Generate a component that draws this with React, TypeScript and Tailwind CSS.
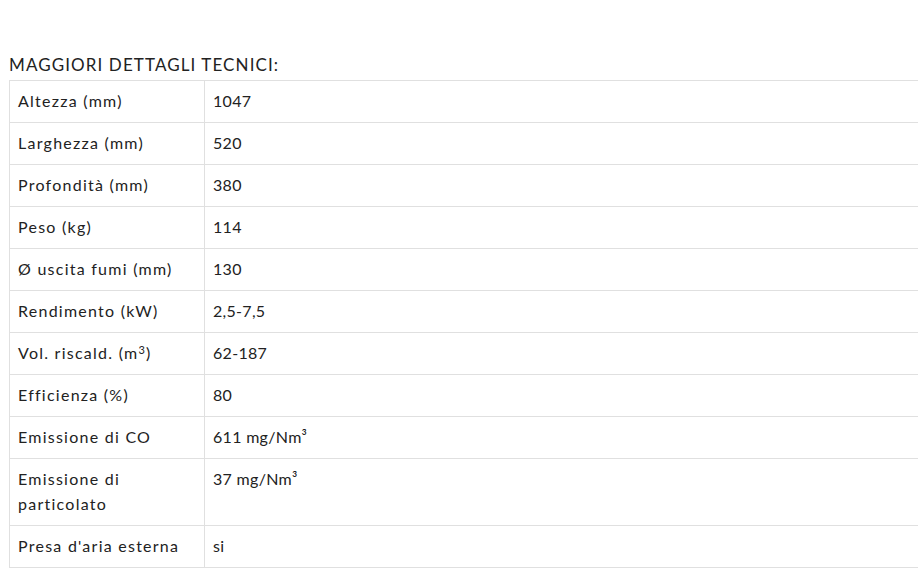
const rows: [React.ReactNode, string][] = [
  ['Altezza (mm)', '1047'],
  ['Larghezza (mm)', '520'],
  ['Profondità (mm)', '380'],
  ['Peso (kg)', '114'],
  ['Ø uscita fumi (mm)', '130'],
  ['Rendimento (kW)', '2,5-7,5'],
  [
    <>
      Vol. riscald. (m<sup className="text-[11px]">3</sup>)
    </>,
    '62-187',
  ],
  ['Efficienza (%)', '80'],
  ['Emissione di CO', '611 mg/Nm³'],
  [
    <>
      Emissione di
      <br />
      particolato
    </>,
    '37 mg/Nm³',
  ],
  ["Presa d'aria esterna", 'si'],
]

export default function App() {
  return (
    <div className="w-[918px] h-[568px] overflow-hidden bg-white text-[#222] font-['Lato',sans-serif]">
      <div className="pt-[53px] pl-[9px]">
        <h3 className="text-[17px] leading-[24px] mb-[3px] tracking-[1.1px]">MAGGIORI DETTAGLI TECNICI:</h3>
        <table className="w-[915px] border-collapse text-[16px] leading-[25px]">
          <tbody>
            {rows.map(([label, value], i) => (
              <tr key={i}>
                <td className="w-[195px] border border-[#e0e0e0] pl-[8px] pr-[9px] pt-[7px] pb-[9px] align-top tracking-[1.25px]">
                  {label}
                </td>
                <td className="border border-[#e0e0e0] px-[8px] pt-[7px] pb-[9px] align-top tracking-[0.3px]">
                  {value}
                </td>
              </tr>
            ))}
          </tbody>
        </table>
      </div>
    </div>
  )
}
